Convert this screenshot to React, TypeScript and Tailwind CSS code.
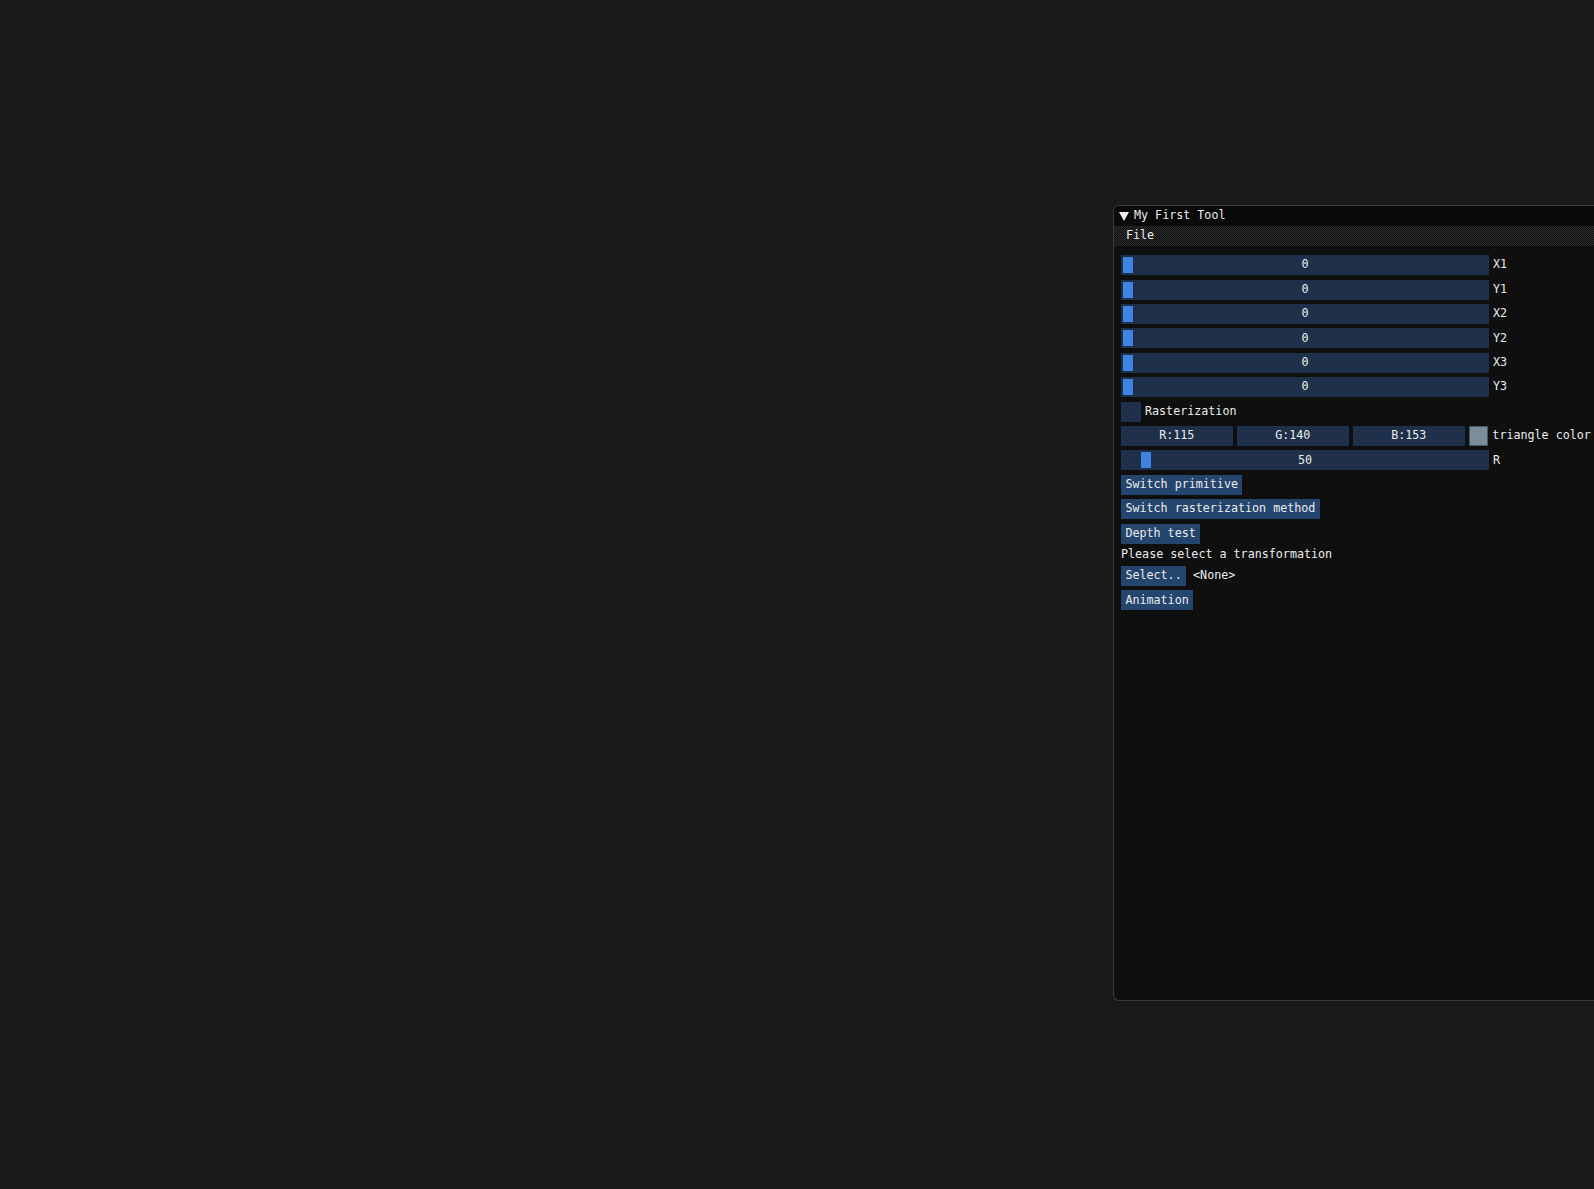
import React from 'react';

const Slider = ({ value, grab, label }: { value: string; grab: number; label: string }) => {
  return (
    <div className="flex h-[20px] items-center">
      <div className="relative flex h-[20px] w-[368px] items-center justify-center bg-[#1e304a]">
        <div className="absolute top-[2px] h-[16px] w-[10px] bg-[#3d85e0]" style={{ left: grab }} />
        <span className="relative">{value}</span>
      </div>
      <span className="ml-[4px]">{label}</span>
    </div>
  );
};

const Button = ({ children }: { children: React.ReactNode }) => (
  <div className="flex h-[20px] items-center bg-[#24456d] px-[4.4px]">{children}</div>
);

const App = () => {
  const sliders = ['X1', 'Y1', 'X2', 'Y2', 'X3', 'Y3'];

  return (
    <div className="h-[1189px] w-[1594px] overflow-hidden bg-[#191919] pl-[1113px] pt-[205px] font-['DejaVu_Sans_Mono',monospace] text-[11.7px] leading-none text-[#ececec]">
      <div className="h-[796px] w-[520px] overflow-hidden rounded-l-[6px] border border-r-0 border-[#3b3b45] bg-[#0f0f0f]">
        {/* title bar */}
        <div className="flex h-[20px] items-center bg-[#0a0a0a] pl-[5px]">
          <svg width="10" height="9" viewBox="0 0 10 9" className="mr-[5px]">
            <polygon points="0,0 10,0 5,9" fill="#ececec" />
          </svg>
          <span>My First Tool</span>
        </div>
        {/* menu bar */}
        <div className="flex h-[20px] items-center bg-[conic-gradient(#2a2a2a_25%,#141414_0_50%,#2a2a2a_0_75%,#141414_0)] bg-[length:2px_2px] pl-[12px]">
          <span>File</span>
        </div>

        <div className="flex flex-col gap-[4.4px] pl-[7px] pt-[9.3px]">
          {sliders.map((s) => (
            <Slider key={s} value="0" grab={1.5} label={s} />
          ))}

          <div className="flex h-[20px] items-center">
            <div className="h-[20px] w-[20px] bg-[#1e304a]" />
            <span className="ml-[4px]">Rasterization</span>
          </div>

          <div className="flex h-[20px] items-center gap-[4.4px]">
            <div className="flex h-[20px] w-[111.6px] items-center justify-center bg-[#1e304a]">R:115</div>
            <div className="flex h-[20px] w-[111.6px] items-center justify-center bg-[#1e304a]">G:140</div>
            <div className="flex h-[20px] w-[111.6px] items-center justify-center bg-[#1e304a]">B:153</div>
            <div className="h-[20px] w-[19px] border border-[#3d5a7a] bg-[#7a8d99]" />
            <span>triangle color</span>
          </div>

          <Slider value="50" grab={19.7} label="R" />

          <div className="flex">
            <Button>Switch primitive</Button>
          </div>
          <div className="flex">
            <Button>Switch rasterization method</Button>
          </div>
          <div className="flex">
            <Button>Depth test</Button>
          </div>

          <div className="flex h-[13.6px] items-center">Please select a transformation</div>

          <div className="flex items-center">
            <Button>Select..</Button>
            <span className="ml-[7px]">&lt;None&gt;</span>
          </div>
          <div className="flex">
            <Button>Animation</Button>
          </div>
        </div>
      </div>
    </div>
  );
};

export default App;
